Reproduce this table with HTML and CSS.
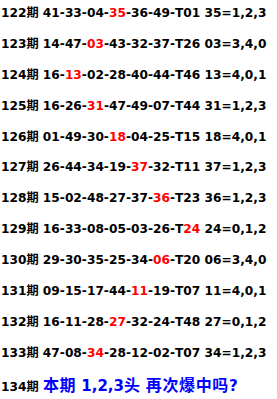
FILE: index.html
```html
<!DOCTYPE html>
<html>
<head>
<meta charset="utf-8">
<link rel="stylesheet" href="styles.css">
</head>
<body>
<div class="list">
  <div class="row">122期 41-33-04-<span class="r">35</span>-36-49-T01 35=1,2,3</div>
  <div class="row">123期 14-47-<span class="r">03</span>-43-32-37-T26 03=3,4,0</div>
  <div class="row">124期 16-<span class="r">13</span>-02-28-40-44-T46 13=4,0,1</div>
  <div class="row">125期 16-26-<span class="r">31</span>-47-49-07-T44 31=1,2,3</div>
  <div class="row">126期 01-49-30-<span class="r">18</span>-04-25-T15 18=4,0,1</div>
  <div class="row">127期 26-44-34-19-<span class="r">37</span>-32-T11 37=1,2,3</div>
  <div class="row">128期 15-02-48-27-37-<span class="r">36</span>-T23 36=1,2,3</div>
  <div class="row">129期 16-33-08-05-03-26-T<span class="r">24</span> 24=0,1,2</div>
  <div class="row">130期 29-30-35-25-34-<span class="r">06</span>-T20 06=3,4,0</div>
  <div class="row">131期 09-15-17-44-<span class="r">11</span>-19-T07 11=4,0,1</div>
  <div class="row">132期 16-11-28-<span class="r">27</span>-32-24-T48 27=0,1,2</div>
  <div class="row">133期 47-08-<span class="r">34</span>-28-12-02-T07 34=1,2,3</div>
  <div class="row">134期 <span class="b"><span class="cjk">本期</span> 1,2,3<span class="cjk">头</span> <span class="cjk">再次爆中吗</span>?</span></div>
</div>
</body>
</html>
```

FILE: styles.css
```css
html, body {
  margin: 0;
  padding: 0;
  background: #fff;
}
.list {
  padding: 0 0 0 1px;
  font-family: "DejaVu Sans", Verdana, "Noto Sans CJK SC", sans-serif;
  font-weight: bold;
  font-size: 12.2px;
  color: #000;
}
.row {
  height: 30.9px;
  line-height: 26px;
  white-space: nowrap;
}
.r {
  color: #ff0000;
}
.b {
  color: #0000ff;
  font-size: 15px;
}
.cjk {
  font-family: "Noto Sans CJK SC", sans-serif;
  font-size: 16px;
  letter-spacing: 0.6px;
}
```
